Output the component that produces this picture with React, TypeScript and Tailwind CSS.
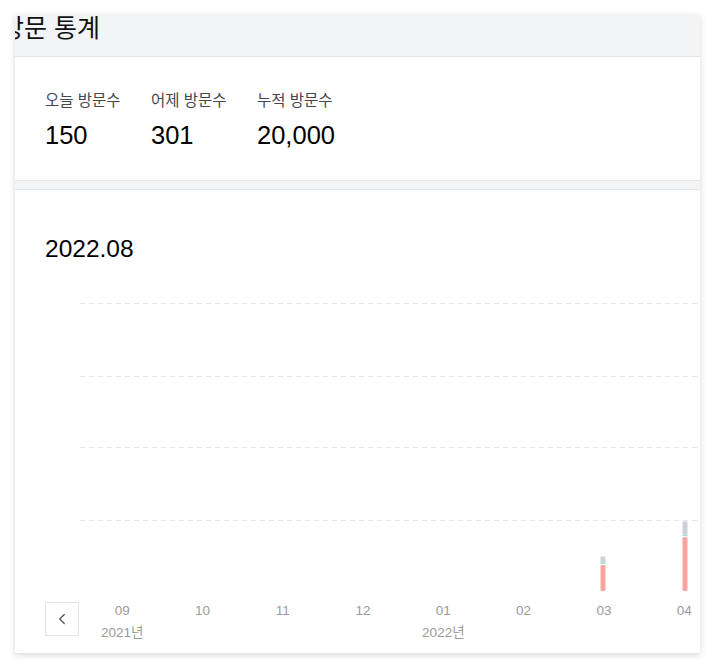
import { ChevronLeft } from 'lucide-react';

interface Stat {
  label: string;
  value: string;
}

interface MonthCol {
  month: string;
  year?: string;
}

const stats: Stat[] = [
  { label: '오늘 방문수', value: '150' },
  { label: '어제 방문수', value: '301' },
  { label: '누적 방문수', value: '20,000' },
];

const months: MonthCol[] = [
  { month: '09', year: '2021년' },
  { month: '10' },
  { month: '11' },
  { month: '12' },
  { month: '01', year: '2022년' },
  { month: '02' },
  { month: '03' },
  { month: '04' },
];

// 막대: x 는 차트 기준 좌표, 각 구간 높이
const bars = [
  { x: 523, gray: 6, red: 26 },
  { x: 605, gray: 13, red: 54 },
];

const gridLines = [8, 81, 152, 225];

function VisitChart() {
  const base = 296;
  return (
    <svg width="640" height="300" viewBox="0 0 640 300" className="block">
      {gridLines.map((y) => (
        <line key={y} x1="0" x2="640" y1={y + 0.5} y2={y + 0.5} stroke="#e3e5e8" strokeDasharray="5 4" />
      ))}
      {bars.map((b) => {
        const redTop = base - b.red;
        const tealTop = redTop - 2.5;
        const grayTop = tealTop - b.gray;
        return (
          <g key={b.x}>
            <rect x={b.x - 2.5} y={grayTop} width="5" height={b.gray} fill="#cdd2d8" />
            <rect x={b.x - 2.5} y={tealTop} width="5" height="1.5" fill="#9fe3d6" />
            <rect x={b.x - 2.5} y={redTop} width="5" height={b.red} rx="1.5" fill="#f8a5a0" />
          </g>
        );
      })}
    </svg>
  );
}

export default function App() {
  return (
    <div
      className="min-h-screen bg-white pt-[15px] pl-[15px]"
      style={{ fontFamily: '"Liberation Sans", "Noto Sans CJK KR", sans-serif' }}
    >
      <div className="w-[685px] overflow-hidden rounded-tr-[3px] bg-white shadow-[0_1px_6px_rgba(0,0,0,0.16)]">
        {/* 헤더 */}
        <div className="h-[42px] overflow-hidden border-b border-[#e3e5e8] bg-[#f3f4f6]">
          <h2 className="relative -top-[3px] -ml-[14px] whitespace-nowrap text-[25px] leading-[32px] text-[#111]">방문 통계</h2>
        </div>

        {/* 방문수 */}
        <div className="flex gap-[30px] border-b border-[#e3e5e8] px-[30px] pt-[34px] pb-[30px]">
          {stats.map((s) => (
            <div key={s.label} className="w-[76px] whitespace-nowrap">
              <div className="text-[15.5px] leading-[20px] text-[#44484e]">{s.label}</div>
              <div className="mt-[9px] text-[25.5px] leading-[30px] text-black">{s.value}</div>
            </div>
          ))}
        </div>

        <div className="h-[9px] border-b border-[#e3e5e8] bg-[#f3f4f6]" />

        {/* 차트 */}
        <div className="border-b border-[#e3e5e8] pt-[42px] pb-[9px]">
          <div className="px-[30px] text-[24.5px] leading-[34px] text-black">2022.08</div>
          <div className="mt-[29px] pl-[65px]">
            <VisitChart />
          </div>
          <div className="mt-[5px] flex items-start pl-[30px]">
            <button className="mt-[2px] flex h-[34px] w-[34px] shrink-0 items-center justify-center border border-[#e3e5e8] bg-white text-[#555]">
              <ChevronLeft size={18} strokeWidth={1.7} />
            </button>
            <div className="ml-[3px] flex">
              {months.map((m) => (
                <div key={m.month} className="w-[80.3px] shrink-0 text-center text-[13.5px] leading-[22px] text-[#9a9a9a]">
                  <div>{m.month}</div>
                  <div className="h-[22px]">{m.year ?? ''}</div>
                </div>
              ))}
            </div>
          </div>
        </div>
      </div>
    </div>
  );
}
